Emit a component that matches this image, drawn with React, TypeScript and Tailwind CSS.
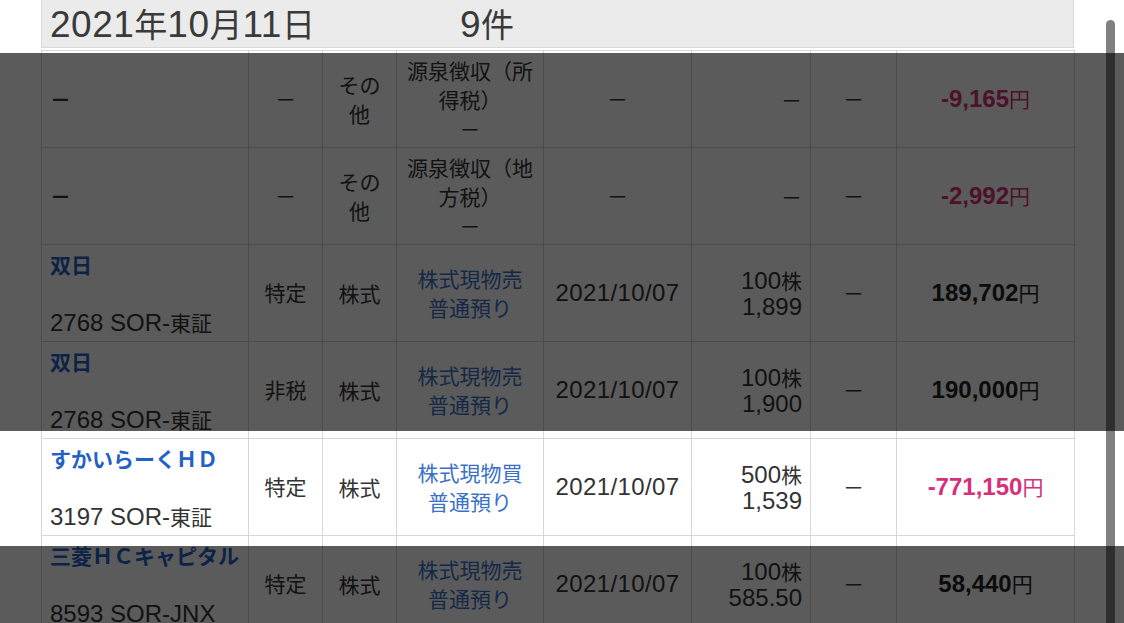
import React from "react";

type Row = {
  name?: string;
  code?: string;
  account: string;
  product: string;
  typeLines: string[];
  typeLink: boolean;
  date: string;
  qty?: [string, string];
  fee: string;
  amount: string;
  negative: boolean;
};

const rows: Row[] = [
  {
    account: "－",
    product: "その他",
    typeLines: ["源泉徴収（所得税）", "－"],
    typeLink: false,
    date: "－",
    fee: "－",
    amount: "-9,165",
    negative: true,
  },
  {
    account: "－",
    product: "その他",
    typeLines: ["源泉徴収（地方税）", "－"],
    typeLink: false,
    date: "－",
    fee: "－",
    amount: "-2,992",
    negative: true,
  },
  {
    name: "双日",
    code: "2768 SOR-",
    account: "特定",
    product: "株式",
    typeLines: ["株式現物売", "普通預り"],
    typeLink: true,
    date: "2021/10/07",
    qty: ["100", "1,899"],
    fee: "－",
    amount: "189,702",
    negative: false,
  },
  {
    name: "双日",
    code: "2768 SOR-",
    account: "非税",
    product: "株式",
    typeLines: ["株式現物売", "普通預り"],
    typeLink: true,
    date: "2021/10/07",
    qty: ["100", "1,900"],
    fee: "－",
    amount: "190,000",
    negative: false,
  },
  {
    name: "すかいらーくＨＤ",
    code: "3197 SOR-",
    account: "特定",
    product: "株式",
    typeLines: ["株式現物買", "普通預り"],
    typeLink: true,
    date: "2021/10/07",
    qty: ["500", "1,539"],
    fee: "－",
    amount: "-771,150",
    negative: true,
  },
  {
    name: "三菱ＨＣキャピタル",
    code: "8593 SOR-JNX",
    account: "特定",
    product: "株式",
    typeLines: ["株式現物売", "普通預り"],
    typeLink: true,
    date: "2021/10/07",
    qty: ["100", "585.50"],
    fee: "－",
    amount: "58,440",
    negative: false,
  },
];

// Japanese runs are set a little smaller than the Latin digits, as on iOS
function J({ children, className = "" }: { children: React.ReactNode; className?: string }) {
  return <span className={`font-['Noto_Sans_CJK_JP',sans-serif] text-[21px] tracking-normal ${className}`}>{children}</span>;
}

const cell = "border border-[#d6d6d6] px-2 align-middle";

export default function App() {
  return (
    <div className="relative h-[623px] w-[1124px] overflow-hidden bg-white font-['Liberation_Sans','Noto_Sans_CJK_JP',sans-serif] text-[24px] text-[#333]">
      <div className="ml-[41px] w-[1033px]">
        {/* date banner */}
        <div className="flex h-[48px] items-center border-x border-b border-[#d9d9d9] bg-[#ebebeb] pl-[8px] text-[37px] leading-[44px] tracking-[0.5px] text-[#3a3a3a]">
          <span>
            2021<J className="text-[33px]">年</J>10<J className="text-[33px]">月</J>11<J className="text-[33px]">日</J>
          </span>
          <span className="ml-[145px]">
            9<J className="text-[33px]">件</J>
          </span>
        </div>

        <table className="mt-[2px] w-full table-fixed border-collapse">
          <colgroup>
            <col className="w-[207px]" />
            <col className="w-[74px]" />
            <col className="w-[74px]" />
            <col className="w-[147px]" />
            <col className="w-[148px]" />
            <col className="w-[119px]" />
            <col className="w-[86px]" />
            <col className="w-[178px]" />
          </colgroup>
          <tbody>
            {rows.map((r, i) => (
              <tr key={i} className="h-[97px]">
                <td className={`${cell} h-[97px]`}>
                  {r.name ? (
                    <div className="flex h-[95px] flex-col justify-between py-[3px] leading-[30px]">
                      <J className="font-bold text-[#2461c4]">{r.name}</J>
                      <div>
                        {r.code}
                        {r.code?.endsWith("-") && <J>東証</J>}
                      </div>
                    </div>
                  ) : (
                    <J className="font-bold text-[#333]">－</J>
                  )}
                </td>
                <td className={`${cell} text-center`}>
                  <J>{r.account}</J>
                </td>
                <td className={`${cell} text-center leading-[28px]`}>
                  <J>{r.product}</J>
                </td>
                <td className={`${cell} text-center leading-[28px]`}>
                  {r.typeLines.map((l, k) => (
                    <div key={k}>
                      <J className={r.typeLink ? "text-[#3b71c7]" : "text-[#333]"}>{l}</J>
                    </div>
                  ))}
                </td>
                <td className={`${cell} text-center tracking-[0.4px]`}>
                  {r.date === "－" ? <J>－</J> : r.date}
                </td>
                <td className={`${cell} text-right leading-[26px]`}>
                  {r.qty ? (
                    <>
                      <div>
                        {r.qty[0]}
                        <J>株</J>
                      </div>
                      <div>{r.qty[1]}</div>
                    </>
                  ) : (
                    <J>－</J>
                  )}
                </td>
                <td className={`${cell} text-center`}>
                  <J>{r.fee}</J>
                </td>
                <td className={`${cell} text-center`}>
                  <span className={r.negative ? "text-[#d6307a]" : "text-[#222]"}>
                    <span className="font-bold">{r.amount}</span>
                    <J>円</J>
                  </span>
                </td>
              </tr>
            ))}
          </tbody>
        </table>
      </div>

      {/* scrollbar thumb */}
      <div className="absolute left-[1106px] top-[20px] h-[700px] w-[9px] rounded-full bg-[#808080]" />

      {/* dimming overlay, leaving the focused row clear */}
      <div className="absolute inset-x-0 top-[53px] h-[378px] bg-black/[0.643]" />
      <div className="absolute inset-x-0 top-[546px] bottom-0 bg-black/[0.643]" />
    </div>
  );
}
